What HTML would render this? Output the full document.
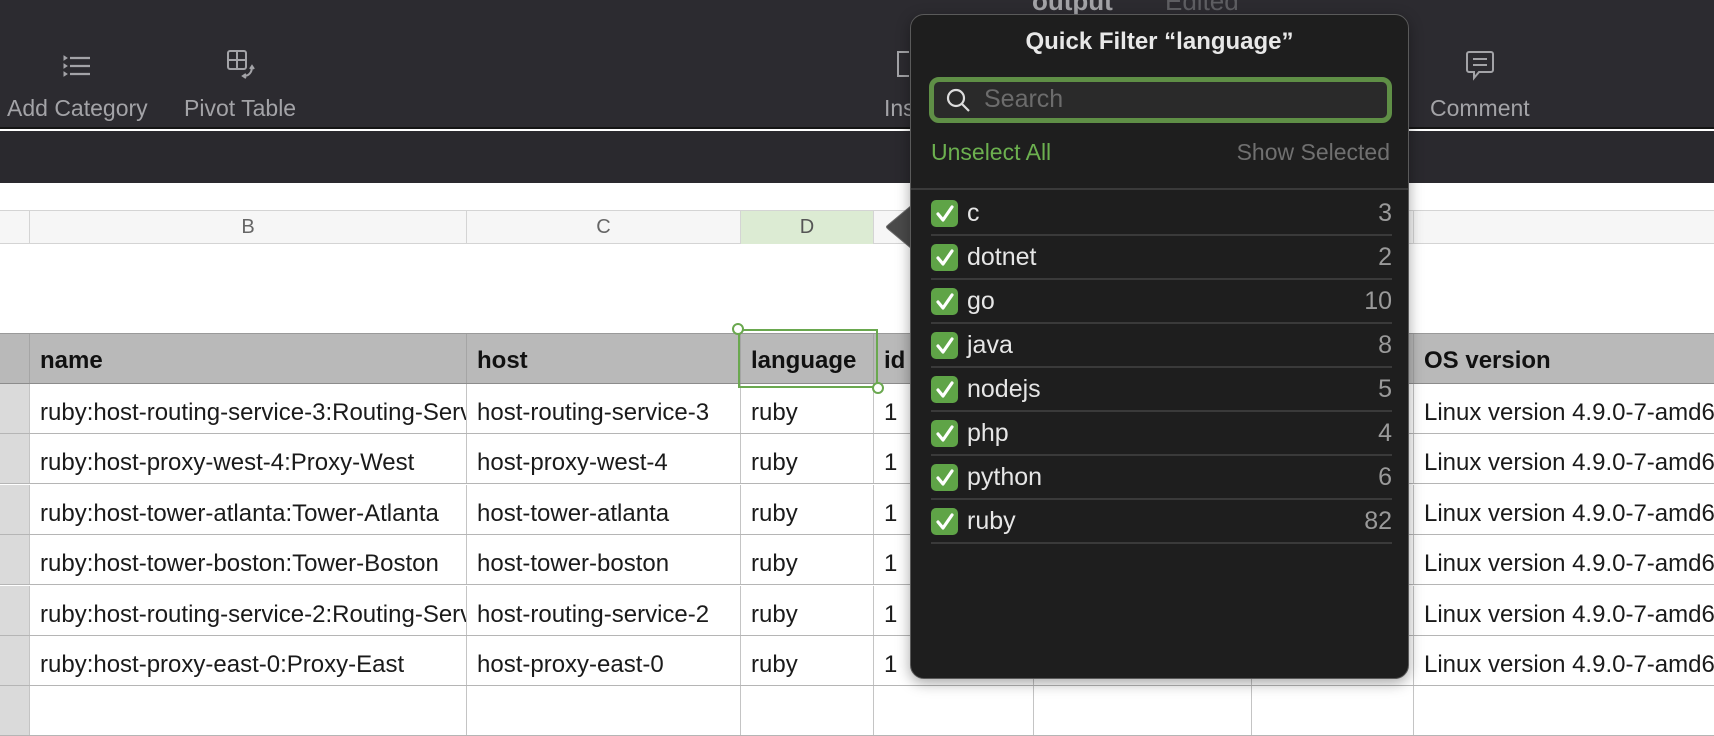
<!DOCTYPE html><html><head><style>
*{margin:0;padding:0;box-sizing:border-box}
body{width:1714px;height:694px;overflow:hidden;background:#fff;font-family:"Liberation Sans",Helvetica,sans-serif;position:relative}
.abs{position:absolute}
.tb{left:0;top:0;width:1714px;height:129px;background:#2c2b30;border-bottom:2px solid #141414}
.tb2{left:0;top:131px;width:1714px;height:52px;background:#2a292e}
.lbl{color:#a3a3a7;font-size:23px;top:95px}
.colh{top:210px;height:34px;background:#f6f6f6;border-top:1px solid #d4d4d4;border-bottom:1px solid #d4d4d4;left:0;width:1714px}
.ch{position:absolute;top:0;height:33px;border-right:1px solid #d4d4d4;color:#666;font-size:20px;text-align:center;line-height:33px}
.hdr{top:333px;height:51px;left:0;width:1714px;background:#b9b9b9;border-top:1px solid #9a9a9a;border-bottom:1px solid #8c8c8c}
.c{position:absolute;height:100%;border-right:1px solid #a5a5a5;font-size:24px;padding-left:10px;white-space:nowrap;overflow:hidden}
.hdr .c{font-weight:bold;line-height:50px;color:#111;padding-top:2px}
.row{left:0;width:1714px;height:50px;border-bottom:1px solid #b5b5b5}
.row .c{line-height:49px;color:#1a1a1a;border-right-color:#c4c4c4;padding-top:4px}
.pop{left:910px;top:14px;width:499px;height:665px;background:#1e1e1e;border:1px solid #5a5a5a;border-radius:14px;box-shadow:0 4px 14px rgba(0,0,0,.35)}
.item{position:absolute;left:20px;width:461px;height:44px;border-bottom:2px solid #3a3a3a;color:#e6e6e6;font-size:25px}
.cb{position:absolute;left:0;top:8px;width:27px;height:27px;background:#5fa447;border-radius:5px}
.item .t{position:absolute;left:36px;top:7px}
.item .n{position:absolute;right:0;top:7px;color:#9a9a9a}
</style></head><body>
<div class="abs tb"></div>
<div class="abs tb2"></div>
<svg class="abs" style="left:62px;top:52px" width="34" height="28" viewBox="0 0 34 28" fill="none" stroke="#a3a3a7" stroke-width="2.2"><path d="M8 6h20M8 14h20M8 22h20"/><path d="M2 4l3 2-3 2zM2 12l3 2-3 2zM2 20l3 2-3 2z" fill="#a3a3a7" stroke-width="1"/></svg>
<svg class="abs" style="left:226px;top:49px" width="34" height="34" viewBox="0 0 34 34" fill="none" stroke="#a3a3a7" stroke-width="2"><rect x="2" y="2" width="18" height="18" rx="2"/><path d="M11 2v18M2 11h18"/><path d="M26 18c0 5-3 9-8 9" /><path d="M24 20l2-3 2 3M20 25l-3 2 3 2"/></svg>
<svg class="abs" style="left:895px;top:50px" width="16" height="30" viewBox="0 0 16 30" fill="none" stroke="#a3a3a7" stroke-width="2"><path d="M14 2H3v24h11"/></svg>
<svg class="abs" style="left:1465px;top:50px" width="30" height="32" viewBox="0 0 30 32" fill="none" stroke="#a3a3a7" stroke-width="2"><path d="M4 2h22a2 2 0 0 1 2 2v16a2 2 0 0 1-2 2H14l-5 6v-6H4a2 2 0 0 1-2-2V4a2 2 0 0 1 2-2z"/><path d="M8 9h14M8 15h14"/></svg>
<div class="abs lbl" style="left:7px">Add Category</div>
<div class="abs lbl" style="left:184px">Pivot Table</div>
<div class="abs lbl" style="left:884px">Ins</div>
<div class="abs lbl" style="left:1430px">Comment</div>
<div class="abs" style="left:1032px;top:-14px;color:#a3a3a7;font-size:26px;font-weight:bold">output</div>
<div class="abs" style="left:1165px;top:-14px;color:#5e5e62;font-size:26px">Edited</div>

<div class="abs colh">
<div class="ch" style="left:0;width:30px"></div>
<div class="ch" style="left:30px;width:437px">B</div>
<div class="ch" style="left:467px;width:274px">C</div>
<div class="ch" style="left:741px;width:133px;background:#dcebd3;color:#555">D</div>
<div class="ch" style="left:874px;width:160px"></div>
<div class="ch" style="left:1034px;width:218px"></div>
<div class="ch" style="left:1252px;width:162px"></div>
</div>

<div class="abs hdr">
<div class="c" style="left:0;width:30px;padding:0"></div>
<div class="c" style="left:30px;width:437px">name</div>
<div class="c" style="left:467px;width:274px">host</div>
<div class="c" style="left:741px;width:133px">language</div>
<div class="c" style="left:874px;width:160px">id</div>
<div class="c" style="left:1034px;width:218px"></div>
<div class="c" style="left:1252px;width:162px"></div>
<div class="c" style="left:1414px;width:300px;border:0">OS version</div>
</div>

<div id="rows"></div>
<script>
var d=[["ruby:host-routing-service-3:Routing-Service","host-routing-service-3"],["ruby:host-proxy-west-4:Proxy-West","host-proxy-west-4"],["ruby:host-tower-atlanta:Tower-Atlanta","host-tower-atlanta"],["ruby:host-tower-boston:Tower-Boston","host-tower-boston"],["ruby:host-routing-service-2:Routing-Service","host-routing-service-2"],["ruby:host-proxy-east-0:Proxy-East","host-proxy-east-0"],["",""]];
var h="";d.forEach(function(r,i){var top=384+i*50.4;var e=r[0]?"ruby":"";
h+='<div class="abs row" style="top:'+top+'px"><div class="c" style="left:0;width:30px;padding:0;background:#dadada"></div><div class="c" style="left:30px;width:437px">'+r[0]+'</div><div class="c" style="left:467px;width:274px">'+r[1]+'</div><div class="c" style="left:741px;width:133px">'+e+'</div><div class="c" style="left:874px;width:160px">'+(e?"1":"")+'</div><div class="c" style="left:1034px;width:218px"></div><div class="c" style="left:1252px;width:162px"></div><div class="c" style="left:1414px;width:300px;border:0">'+(e?"Linux version 4.9.0-7-amd64":"")+'</div></div>';});
document.getElementById("rows").innerHTML=h;
</script>
<div class="abs" style="left:738px;top:329px;width:140px;height:59px;border:2px solid #6aa84f"></div>
<div class="abs" style="left:732px;top:323px;width:12px;height:12px;border:2px solid #6aa84f;border-radius:50%;background:#fff"></div>
<div class="abs" style="left:872px;top:382px;width:12px;height:12px;border:2px solid #6aa84f;border-radius:50%;background:#fff"></div>

<svg class="abs" style="left:885px;top:205px" width="30" height="44" viewBox="0 0 30 44"><path d="M27 0 L3 20 Q0 22 3 24 L27 44Z" fill="#4a4a4a" stroke="#6a6a6a" stroke-width="1"/></svg>
<div class="abs pop">
<div class="abs" style="left:0;width:497px;top:13px;text-align:center;color:#e8e8e8;font-size:24px;font-weight:bold">Quick Filter “language”</div>
<div class="abs" style="left:18px;top:62px;width:463px;height:46px;border:5px solid #5f8f46;border-radius:10px;background:#2a2a2a"></div>
<svg class="abs" style="left:34px;top:72px" width="28" height="28" viewBox="0 0 28 28" fill="none" stroke="#ddd" stroke-width="2.2"><circle cx="11" cy="11" r="8"/><path d="M17 17l7 7"/></svg>
<div class="abs" style="left:73px;top:70px;color:#6c6c6c;font-size:25px">Search</div>
<div class="abs" style="left:20px;top:124px;color:#6cb04f;font-size:23px">Unselect All</div>
<div class="abs" style="right:18px;top:124px;color:#707070;font-size:23px">Show Selected</div>
<div class="abs" style="left:0;top:173px;width:497px;height:2px;background:#3a3a3a"></div>
<div id="items"></div>
</div>
<script>
var it=[["c",3],["dotnet",2],["go",10],["java",8],["nodejs",5],["php",4],["python",6],["ruby",82]],s="";
it.forEach(function(a,i){s+='<div class="item" style="top:'+(177+i*44)+'px"><div class="cb"><svg width="27" height="27" viewBox="0 0 27 27"><path d="M7 14l5 6 9-13" fill="none" stroke="#fff" stroke-width="3.2" stroke-linecap="round" stroke-linejoin="round"/></svg></div><div class="t">'+a[0]+'</div><div class="n">'+a[1]+'</div></div>';});
document.getElementById("items").innerHTML=s;
</script>
</body></html>
